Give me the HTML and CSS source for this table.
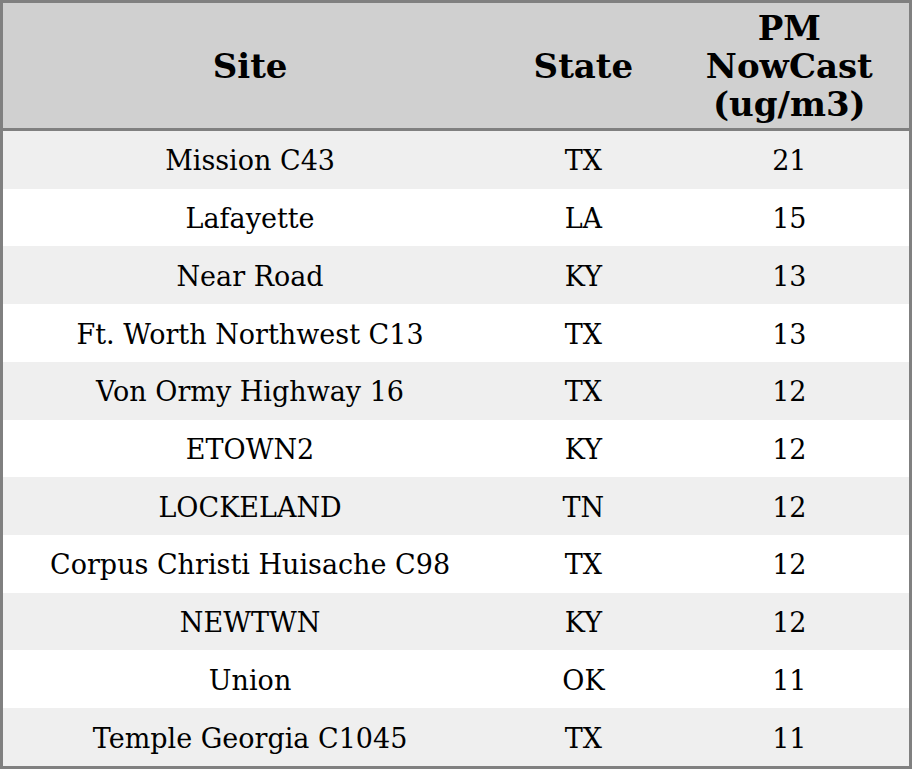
FILE: index.html
```html
<!DOCTYPE html>
<html>
<head>
<meta charset="utf-8">
<link rel="stylesheet" href="styles.css">
</head>
<body>
<table class="data">
  <colgroup>
    <col class="c-site">
    <col class="c-state">
    <col class="c-pm">
  </colgroup>
  <thead>
    <tr><th>Site</th><th>State</th><th>PM<br>NowCast<br>(ug/m3)</th></tr>
  </thead>
  <tbody>
    <tr><td>Mission C43</td><td>TX</td><td>21</td></tr>
    <tr><td>Lafayette</td><td>LA</td><td>15</td></tr>
    <tr><td>Near Road</td><td>KY</td><td>13</td></tr>
    <tr><td>Ft. Worth Northwest C13</td><td>TX</td><td>13</td></tr>
    <tr><td>Von Ormy Highway 16</td><td>TX</td><td>12</td></tr>
    <tr><td>ETOWN2</td><td>KY</td><td>12</td></tr>
    <tr><td>LOCKELAND</td><td>TN</td><td>12</td></tr>
    <tr><td>Corpus Christi Huisache C98</td><td>TX</td><td>12</td></tr>
    <tr><td>NEWTWN</td><td>KY</td><td>12</td></tr>
    <tr><td>Union</td><td>OK</td><td>11</td></tr>
    <tr><td>Temple Georgia C1045</td><td>TX</td><td>11</td></tr>
  </tbody>
</table>
</body>
</html>
```
FILE: styles.css
```css
html, body {
  margin: 0;
  padding: 0;
  background: #ffffff;
}
.data {
  width: 912px;
  height: 769px;
  border-collapse: collapse;
  border: 3px solid #808080;
  font-family: "DejaVu Serif", serif;
  color: #000;
  table-layout: fixed;
}
.c-site { width: 494px; }
.c-state { width: 172px; }
.c-pm { width: 240px; }
.data th {
  background: #d0d0d0;
  font-weight: bold;
  font-size: 34px;
  line-height: 38px;
  height: 125px;
  padding: 0;
  text-align: center;
  border-bottom: 3px solid #808080;
}
.data td {
  font-size: 27px;
  text-align: center;
  padding: 2px 0 0 0;
  height: 55.7px;
}
.data tbody tr:nth-child(odd) td { background: #efefef; }
.data tbody tr:nth-child(even) td { background: #ffffff; }
```
